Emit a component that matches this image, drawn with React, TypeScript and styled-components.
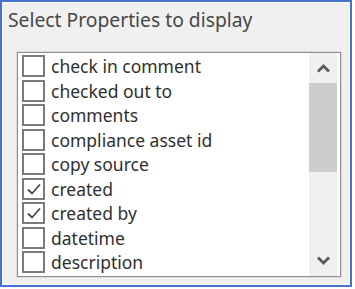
import styled, { createGlobalStyle } from "styled-components";

const GlobalStyle = createGlobalStyle`
  html, body {
    margin: 0;
    padding: 0;
    background: #ffffff;
  }
  body {
    font-family: "Noto Sans", "Liberation Sans", sans-serif;
  }
`;

const properties = [
  { label: "check in comment", checked: false },
  { label: "checked out to", checked: false },
  { label: "comments", checked: false },
  { label: "compliance asset id", checked: false },
  { label: "copy source", checked: false },
  { label: "created", checked: true },
  { label: "created by", checked: true },
  { label: "datetime", checked: false },
  { label: "description", checked: false },
];

const Frame = styled.div`
  box-sizing: border-box;
  width: 352px;
  height: 287px;
  border: 2px solid #4674cf;
  background: #f0f0f0;
  box-shadow: inset 1px 1px 0 #fbfbfb, inset -1px -1px 0 #fbfbfb;
  padding: 0 0 0 15px;
`;

const Title = styled.div`
  height: 50px;
  margin-left: -9px;
  padding-top: 6px;
  box-sizing: border-box;
  font-size: 19.3px;
  line-height: 24px;
  color: #474747;
`;

const ListBox = styled.div`
  box-sizing: border-box;
  width: 324px;
  height: 225px;
  border: 1px solid #8e8e8e;
  box-shadow: 0 0 0 1px #dcdcdc;
  background: #ffffff;
  display: flex;
`;

const Items = styled.ul`
  flex: 1;
  margin: 0;
  padding: 1px 0 0 4px;
  list-style: none;
  overflow: hidden;
`;

const Row = styled.li`
  height: 24.5px;
  display: flex;
  align-items: center;
  gap: 6px;
  font-size: 17.5px;
  color: #2f2f2f;
  white-space: nowrap;
`;

const Box = styled.span<{ $checked: boolean }>`
  box-sizing: border-box;
  flex: none;
  width: 23px;
  height: 22px;
  border: 2px solid #7a7a7a;
  background: #ffffff;
  display: flex;
  align-items: center;
  justify-content: center;
  svg {
    visibility: ${({ $checked }) => ($checked ? "visible" : "hidden")};
  }
`;

const ScrollBar = styled.div`
  flex: none;
  width: 28px;
  margin-right: 3px;
  background: #f0f0f0;
  display: flex;
  flex-direction: column;
`;

const Arrow = styled.div`
  height: 30px;
  display: flex;
  align-items: center;
  justify-content: center;
  flex: none;
`;

const Thumb = styled.div`
  height: 89px;
  background: #cdcdcd;
  flex: none;
`;

const Track = styled.div`
  flex: 1;
`;

const Check = () => (
  <svg width="16" height="14" viewBox="0 0 16 14">
    <path d="M2 7.5 L6 11.5 L14 2.5" fill="none" stroke="#4a4a4a" strokeWidth="1.8" />
  </svg>
);

const Chevron = ({ up }: { up: boolean }) => (
  <svg width="15" height="10" viewBox="0 0 15 10">
    <path
      d={up ? "M2 8.5 L7.5 3 L13 8.5" : "M2 1.5 L7.5 7 L13 1.5"}
      fill="none"
      stroke="#5a5a5a"
      strokeWidth="2.8"
    />
  </svg>
);

const App = () => {
  return (
    <>
      <GlobalStyle />
      <Frame>
        <Title>Select Properties to display</Title>
        <ListBox>
          <Items>
            {properties.map((p) => (
              <Row key={p.label}>
                <Box $checked={p.checked}>
                  <Check />
                </Box>
                {p.label}
              </Row>
            ))}
          </Items>
          <ScrollBar>
            <Arrow>
              <Chevron up />
            </Arrow>
            <Thumb />
            <Track />
            <Arrow>
              <Chevron up={false} />
            </Arrow>
          </ScrollBar>
        </ListBox>
      </Frame>
    </>
  );
};

export default App;
